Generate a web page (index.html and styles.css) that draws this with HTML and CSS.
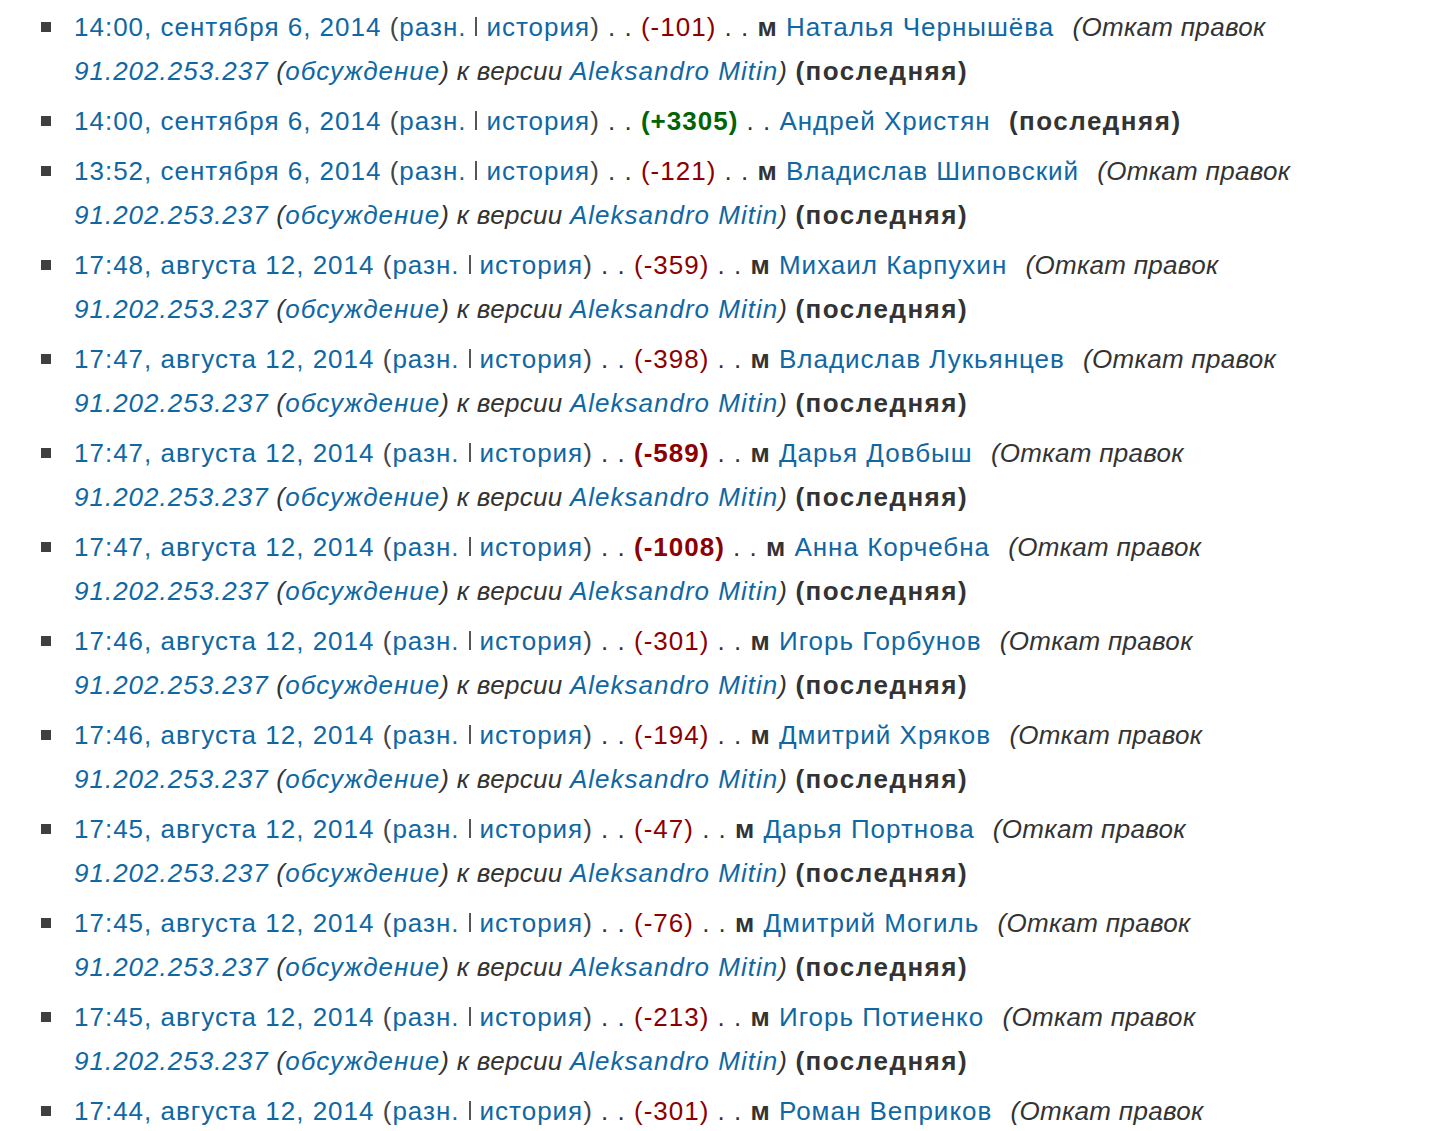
FILE: index.html
```html
<!DOCTYPE html>
<html lang="ru">
<head>
<meta charset="utf-8">
<title>История изменений</title>
<link rel="stylesheet" href="styles.css">
</head>
<body>
<ul class="history">
  <li><div class="entry"><a class="date">14:00, сентября 6, 2014</a> <span class="links">(<a>разн.</a><span class="sep"></span><a>история</a>)</span> . . <span class="neg">(-101)</span> . . <b class="minor">м</b> <a class="user">Наталья Чернышёва</a> <span class="comment">(Откат правок <a>91.202.253.237</a> (<a>обсуждение</a>) к версии <a>Aleksandro Mitin</a>)</span> <b class="cur">(последняя)</b></div></li>
  <li><div class="entry"><a class="date">14:00, сентября 6, 2014</a> <span class="links">(<a>разн.</a><span class="sep"></span><a>история</a>)</span> . . <b class="pos">(+3305)</b> . . <a class="user">Андрей Христян</a> <b class="cur">(последняя)</b></div></li>
  <li><div class="entry"><a class="date">13:52, сентября 6, 2014</a> <span class="links">(<a>разн.</a><span class="sep"></span><a>история</a>)</span> . . <span class="neg">(-121)</span> . . <b class="minor">м</b> <a class="user">Владислав Шиповский</a> <span class="comment">(Откат правок <a>91.202.253.237</a> (<a>обсуждение</a>) к версии <a>Aleksandro Mitin</a>)</span> <b class="cur">(последняя)</b></div></li>
  <li><div class="entry"><a class="date">17:48, августа 12, 2014</a> <span class="links">(<a>разн.</a><span class="sep"></span><a>история</a>)</span> . . <span class="neg">(-359)</span> . . <b class="minor">м</b> <a class="user">Михаил Карпухин</a> <span class="comment">(Откат правок <a>91.202.253.237</a> (<a>обсуждение</a>) к версии <a>Aleksandro Mitin</a>)</span> <b class="cur">(последняя)</b></div></li>
  <li><div class="entry"><a class="date">17:47, августа 12, 2014</a> <span class="links">(<a>разн.</a><span class="sep"></span><a>история</a>)</span> . . <span class="neg">(-398)</span> . . <b class="minor">м</b> <a class="user">Владислав Лукьянцев</a> <span class="comment">(Откат правок <a>91.202.253.237</a> (<a>обсуждение</a>) к версии <a>Aleksandro Mitin</a>)</span> <b class="cur">(последняя)</b></div></li>
  <li><div class="entry"><a class="date">17:47, августа 12, 2014</a> <span class="links">(<a>разн.</a><span class="sep"></span><a>история</a>)</span> . . <b class="neg">(-589)</b> . . <b class="minor">м</b> <a class="user">Дарья Довбыш</a> <span class="comment">(Откат правок <a>91.202.253.237</a> (<a>обсуждение</a>) к версии <a>Aleksandro Mitin</a>)</span> <b class="cur">(последняя)</b></div></li>
  <li><div class="entry"><a class="date">17:47, августа 12, 2014</a> <span class="links">(<a>разн.</a><span class="sep"></span><a>история</a>)</span> . . <b class="neg">(-1008)</b> . . <b class="minor">м</b> <a class="user">Анна Корчебна</a> <span class="comment">(Откат правок <a>91.202.253.237</a> (<a>обсуждение</a>) к версии <a>Aleksandro Mitin</a>)</span> <b class="cur">(последняя)</b></div></li>
  <li><div class="entry"><a class="date">17:46, августа 12, 2014</a> <span class="links">(<a>разн.</a><span class="sep"></span><a>история</a>)</span> . . <span class="neg">(-301)</span> . . <b class="minor">м</b> <a class="user">Игорь Горбунов</a> <span class="comment">(Откат правок <a>91.202.253.237</a> (<a>обсуждение</a>) к версии <a>Aleksandro Mitin</a>)</span> <b class="cur">(последняя)</b></div></li>
  <li><div class="entry"><a class="date">17:46, августа 12, 2014</a> <span class="links">(<a>разн.</a><span class="sep"></span><a>история</a>)</span> . . <span class="neg">(-194)</span> . . <b class="minor">м</b> <a class="user">Дмитрий Хряков</a> <span class="comment">(Откат правок <a>91.202.253.237</a> (<a>обсуждение</a>) к версии <a>Aleksandro Mitin</a>)</span> <b class="cur">(последняя)</b></div></li>
  <li><div class="entry"><a class="date">17:45, августа 12, 2014</a> <span class="links">(<a>разн.</a><span class="sep"></span><a>история</a>)</span> . . <span class="neg">(-47)</span> . . <b class="minor">м</b> <a class="user">Дарья Портнова</a> <span class="comment">(Откат правок <a>91.202.253.237</a> (<a>обсуждение</a>) к версии <a>Aleksandro Mitin</a>)</span> <b class="cur">(последняя)</b></div></li>
  <li><div class="entry"><a class="date">17:45, августа 12, 2014</a> <span class="links">(<a>разн.</a><span class="sep"></span><a>история</a>)</span> . . <span class="neg">(-76)</span> . . <b class="minor">м</b> <a class="user">Дмитрий Могиль</a> <span class="comment">(Откат правок <a>91.202.253.237</a> (<a>обсуждение</a>) к версии <a>Aleksandro Mitin</a>)</span> <b class="cur">(последняя)</b></div></li>
  <li><div class="entry"><a class="date">17:45, августа 12, 2014</a> <span class="links">(<a>разн.</a><span class="sep"></span><a>история</a>)</span> . . <span class="neg">(-213)</span> . . <b class="minor">м</b> <a class="user">Игорь Потиенко</a> <span class="comment">(Откат правок <a>91.202.253.237</a> (<a>обсуждение</a>) к версии <a>Aleksandro Mitin</a>)</span> <b class="cur">(последняя)</b></div></li>
  <li><div class="entry"><a class="date">17:44, августа 12, 2014</a> <span class="links">(<a>разн.</a><span class="sep"></span><a>история</a>)</span> . . <span class="neg">(-301)</span> . . <b class="minor">м</b> <a class="user">Роман Веприков</a> <span class="comment">(Откат правок <a>91.202.253.237</a> (<a>обсуждение</a>) к версии <a>Aleksandro Mitin</a>)</span> <b class="cur">(последняя)</b></div></li>
</ul>
</body>
</html>
```

FILE: styles.css
```css
html, body {
  margin: 0;
  padding: 0;
  background: #ffffff;
}

body {
  font-family: "Liberation Sans", Arial, Helvetica, sans-serif;
  font-size: 26px;
  line-height: 44px;
  letter-spacing: 1px;
  color: #333333;
}

.history {
  list-style: none;
  margin: 0;
  padding: 5px 100px 0 41px;
}

.history li {
  display: flex;
  align-items: flex-start;
  margin-bottom: 6px;
}

.history li::before {
  content: "";
  flex: none;
  width: 10px;
  height: 10px;
  margin-top: 17px;
  margin-right: 23px;
  background: #3f3f3f;
}

.entry {
  flex: 1;
  min-width: 0;
}

a {
  color: #0f67a3;
  text-decoration: none;
}

.links {
  color: #444444;
}

.sep {
  display: inline-block;
  width: 2px;
  height: 19px;
  margin: 0 9px 0 9px;
  background: #555555;
  vertical-align: baseline;
}

.neg {
  color: #8b0000;
}

.pos {
  color: #006400;
}

.minor {
  color: #333333;
}

.user {
  margin-right: 10px;
}

.comment {
  font-style: italic;
  color: #333333;
  letter-spacing: 0.3px;
}

.comment a {
  letter-spacing: 1px;
}

.cur {
  color: #333333;
  letter-spacing: 1.5px;
}
```
